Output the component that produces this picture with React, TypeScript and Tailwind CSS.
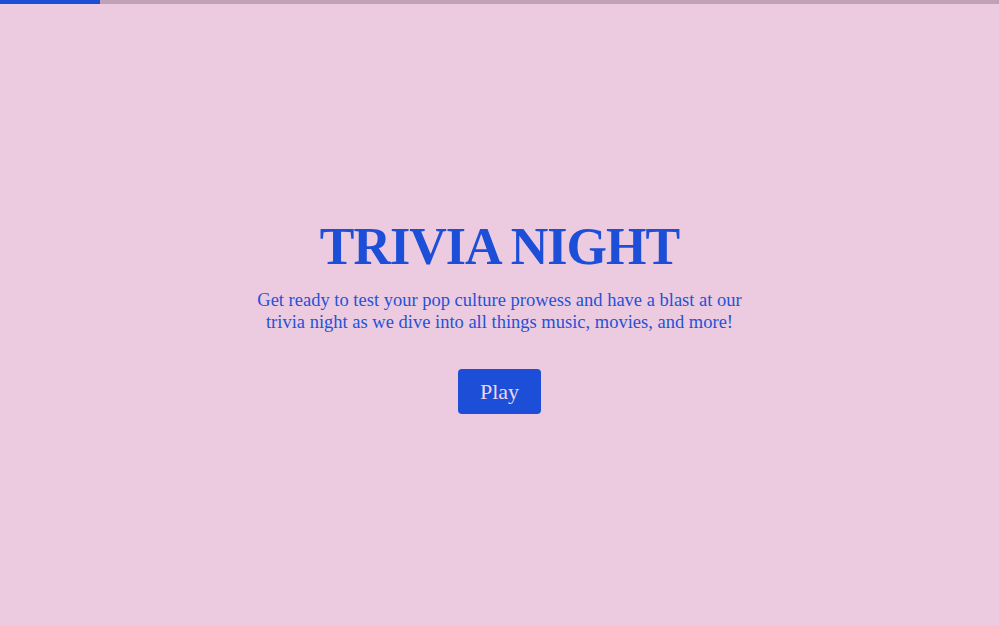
export default function App() {
  return (
    <div className="min-h-screen bg-[#eccbe0] flex flex-col" style={{ fontFamily: '"Liberation Serif", "DejaVu Serif", serif' }}>
      {/* progress */}
      <div className="h-1 w-full bg-[#bfa2b7]">
        <div className="h-full w-[10%] bg-[#1d4ed8]" />
      </div>

      <main className="flex-1 flex flex-col items-center justify-center text-center px-4 pt-[6px]">
        <h1 className="text-[52px] leading-none font-bold text-[#1d4ed8] tracking-[-1px]">TRIVIA NIGHT</h1>
        <p className="mt-4 max-w-[490px] text-[18.5px] leading-[22px] text-[#2452d6]">
          Get ready to test your pop culture prowess and have a blast at our trivia night as we dive into all things music, movies, and more!
        </p>
        <button className="mt-9 w-[83px] h-[45px] rounded-[4px] bg-[#1d4ed8] text-[22px] text-[#f0d6e6]">
          Play
        </button>
      </main>
    </div>
  );
}
